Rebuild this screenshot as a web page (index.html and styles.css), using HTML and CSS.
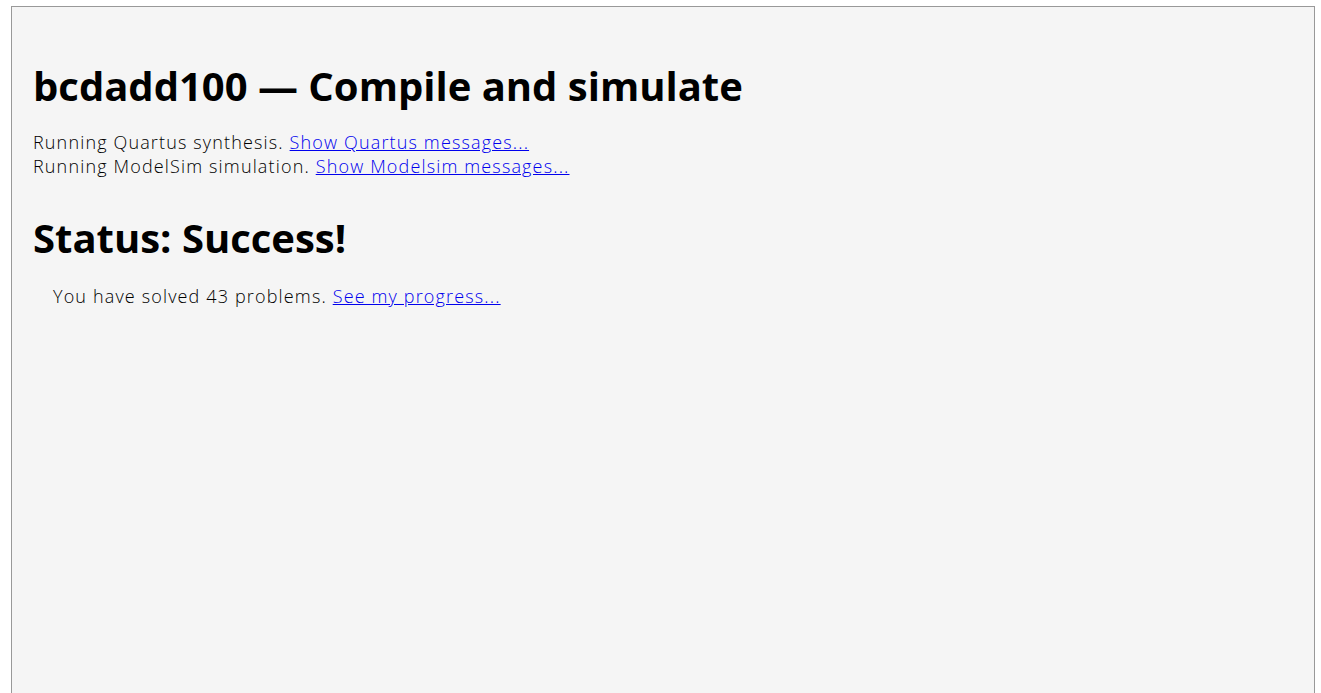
FILE: index.html
```html
<!DOCTYPE html>
<html>
<head>
<meta charset="utf-8">
<link rel="stylesheet" href="styles.css">
</head>
<body>
<div class="panel">
  <h1 class="title">bcdadd100 — Compile and simulate</h1>
  <div class="log">
    <div>Running Quartus synthesis. <a href="#">Show Quartus messages...</a></div>
    <div>Running ModelSim simulation. <a href="#">Show Modelsim messages...</a></div>
  </div>
  <h1 class="status">Status: Success!</h1>
  <div class="result">You have solved 43 problems. <a href="#">See my progress...</a></div>
</div>
</body>
</html>
```
FILE: styles.css
```css
html, body {
  margin: 0;
  padding: 0;
  background: #ffffff;
}
body {
  padding: 6px 6px 0 11px;
  font-family: "Open Sans", "Lato", sans-serif;
  font-weight: 300;
  font-size: 18px;
  letter-spacing: 1.15px;
  color: #000;
}
.panel {
  border: 1px solid #999999;
  background: #f5f5f5;
  min-height: 800px;
  padding: 30px 21px 0 21px;
  box-sizing: border-box;
}
.title, .status {
  font-family: "Open Sans", sans-serif;
  font-weight: 700;
  font-size: 40px;
  letter-spacing: 0;
  margin: 0;
  line-height: 54px;
}
.title {
  margin-top: 22px;
  margin-bottom: 17px;
}
.log {
  line-height: 24px;
}
.status {
  margin-top: 33px;
  margin-bottom: 19px;
}
.result {
  margin-left: 20px;
  line-height: 24px;
}
a {
  color: #0000ee;
  text-decoration: underline;
}
```
